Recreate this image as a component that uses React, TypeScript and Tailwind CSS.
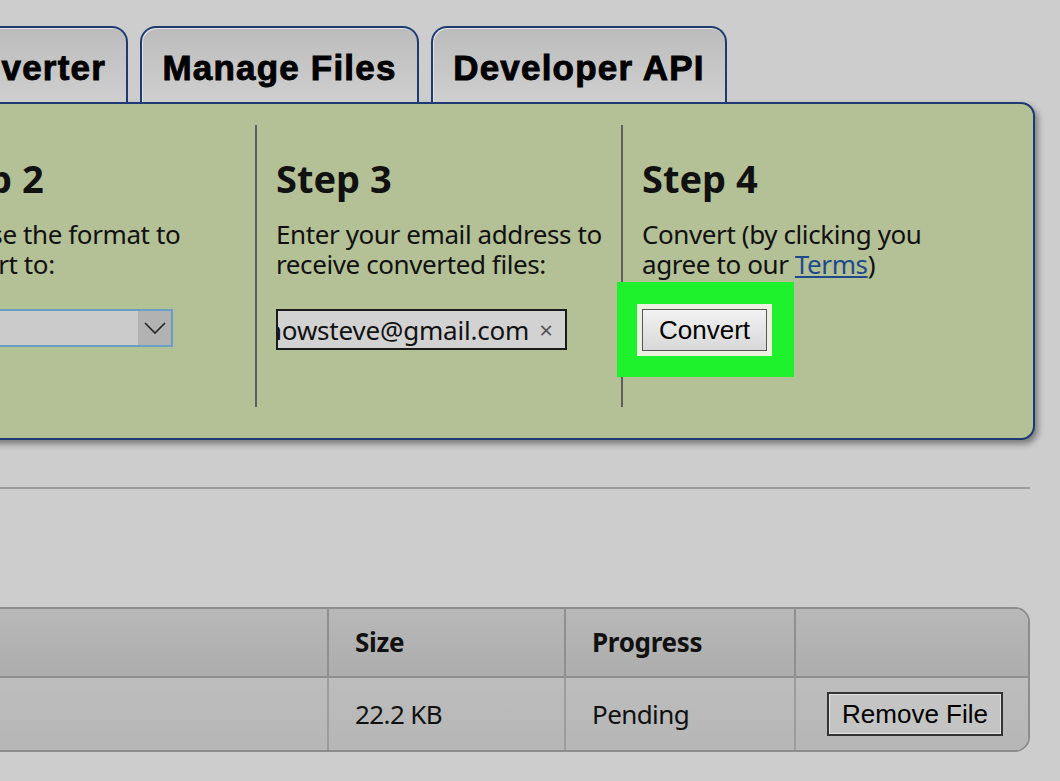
export default function App() {
  const tab =
    "h-[76px] shrink-0 rounded-t-[16px] border-2 border-b-0 border-[#1d3b72] bg-linear-to-b from-[#bcbcbc] to-[#cfcfcf] shadow-[inset_1px_1px_0_#e2e2e2] flex items-center pt-[6px] text-[35px] font-bold tracking-[1.2px] [-webkit-text-stroke:0.9px_#000] font-['Liberation_Sans',Arial,sans-serif] text-black";
  const col = "shrink-0 pt-[34px]";
  const heading = "text-[38px] font-bold leading-none";
  const body = "mt-[22px] text-[26px] leading-[30px] tracking-[-0.4px] whitespace-nowrap";

  return (
    <div className="w-[1060px] h-[781px] overflow-hidden bg-[#cdcdcd] font-['Noto_Sans',sans-serif] text-[#111]">
      {/* tabs */}
      <div className="flex gap-3 pt-[26px] -ml-[122px]">
        <div className={`${tab} w-[250px] justify-end pr-[20px]`}>Converter</div>
        <div className={`${tab} w-[279px] justify-center`}>Manage Files</div>
        <div className={`${tab} w-[296px] justify-center`}>Developer API</div>
      </div>

      {/* steps panel */}
      <div className="-ml-[131px] w-[1166px] h-[338px] border-2 border-[#1d3b72] rounded-r-[14px] bg-[#b4c096] shadow-[3px_4px_6px_rgba(0,0,0,0.4)] flex pl-[18px] pt-[21px] pb-[31px]">
        <div className={`${col} w-[366px] pl-[39px]`}>
          <div className={heading}>Step 2</div>
          <div className={body}>
            Choose the format to
            <br />
            convert to:
          </div>
          <div className="mt-[30px] w-[245px] h-[38px] border-2 border-[#6d9cc4] bg-[#cbcbcb] flex justify-end">
            <div className="w-[33px] h-full bg-[#b2b2b2] flex items-center justify-center">
              <svg width="22" height="12" viewBox="0 0 22 12" fill="none" stroke="#222" strokeWidth="1.6">
                <path d="M1 1 L11 11 L21 1" />
              </svg>
            </div>
          </div>
        </div>

        <div className={`${col} w-[366px] pl-[19px] border-l-2 border-[#5e5e5e]`}>
          <div className={heading}>Step 3</div>
          <div className={body}>
            Enter your email address to
            <br />
            receive converted files:
          </div>
          <div className="mt-[30px] w-[291px] h-[41px] border-2 border-[#1a1a1a] bg-[#d2d2d2] flex items-center overflow-hidden">
            <span className="-ml-[12px] whitespace-nowrap text-[26px] leading-none tracking-[-0.2px]">howsteve@gmail.com</span>
            <span className="ml-auto mr-[12px] text-[24px] leading-none text-[#555]">×</span>
          </div>
        </div>

        <div className={`${col} flex-1 pl-[19px] border-l-2 border-[#5e5e5e]`}>
          <div className={heading}>Step 4</div>
          <div className={body}>
            Convert (by clicking you
            <br />
            agree to our <span className="text-[#1f4a8a] underline">Terms</span>)
          </div>
          <div className="mt-[30px] relative w-fit">
            <div className="absolute -left-[25px] -top-[27px] -right-[27px] -bottom-[26px] bg-[#1ef22c]" />
            <button className="relative w-[125px] h-[42px] border border-[#555] bg-linear-to-b from-[#f2f2f2] to-[#d8d8d8] ring-[5px] ring-[#eef0e2] text-[26px] leading-none font-['Liberation_Sans',Arial,sans-serif] text-black">
              Convert
            </button>
          </div>
        </div>
      </div>

      <div className="mt-[47px] w-[1030px] h-[2px] bg-[#9c9c9c]" />

      {/* file table */}
      <div className="mt-[118px] -ml-[20px] w-[1050px] border-2 border-[#8c8c8c] rounded-r-[15px] overflow-hidden">
        <div className="grid grid-cols-[1fr_237px_230px_234px] h-[67px] bg-linear-to-b from-[#b8b8b8] to-[#adadad] text-[26px] font-bold tracking-[-0.3px]">
          <div />
          <div className="border-l-2 border-[#8f8f8f] flex items-center pl-[26px]">Size</div>
          <div className="border-l-2 border-[#8f8f8f] flex items-center pl-[26px]">Progress</div>
          <div className="border-l-2 border-[#8f8f8f]" />
        </div>
        <div className="grid grid-cols-[1fr_237px_230px_234px] h-[74px] border-t-2 border-[#8f8f8f] bg-linear-to-b from-[#bdbdbd] to-[#b6b6b6] text-[26px] tracking-[-0.6px]">
          <div />
          <div className="border-l-2 border-[#9c9c9c] flex items-center pl-[26px]">22.2 KB</div>
          <div className="border-l-2 border-[#9c9c9c] flex items-center pl-[26px]">Pending</div>
          <div className="border-l-2 border-[#9c9c9c] flex items-center pl-[31px]">
            <button className="w-[176px] h-[44px] border-2 border-[#333] bg-[#c4c4c4] shadow-[inset_0_0_0_1px_#e0e0e0] text-[26px] leading-none tracking-normal font-['Liberation_Sans',Arial,sans-serif] text-black">
              Remove File
            </button>
          </div>
        </div>
      </div>
    </div>
  );
}
